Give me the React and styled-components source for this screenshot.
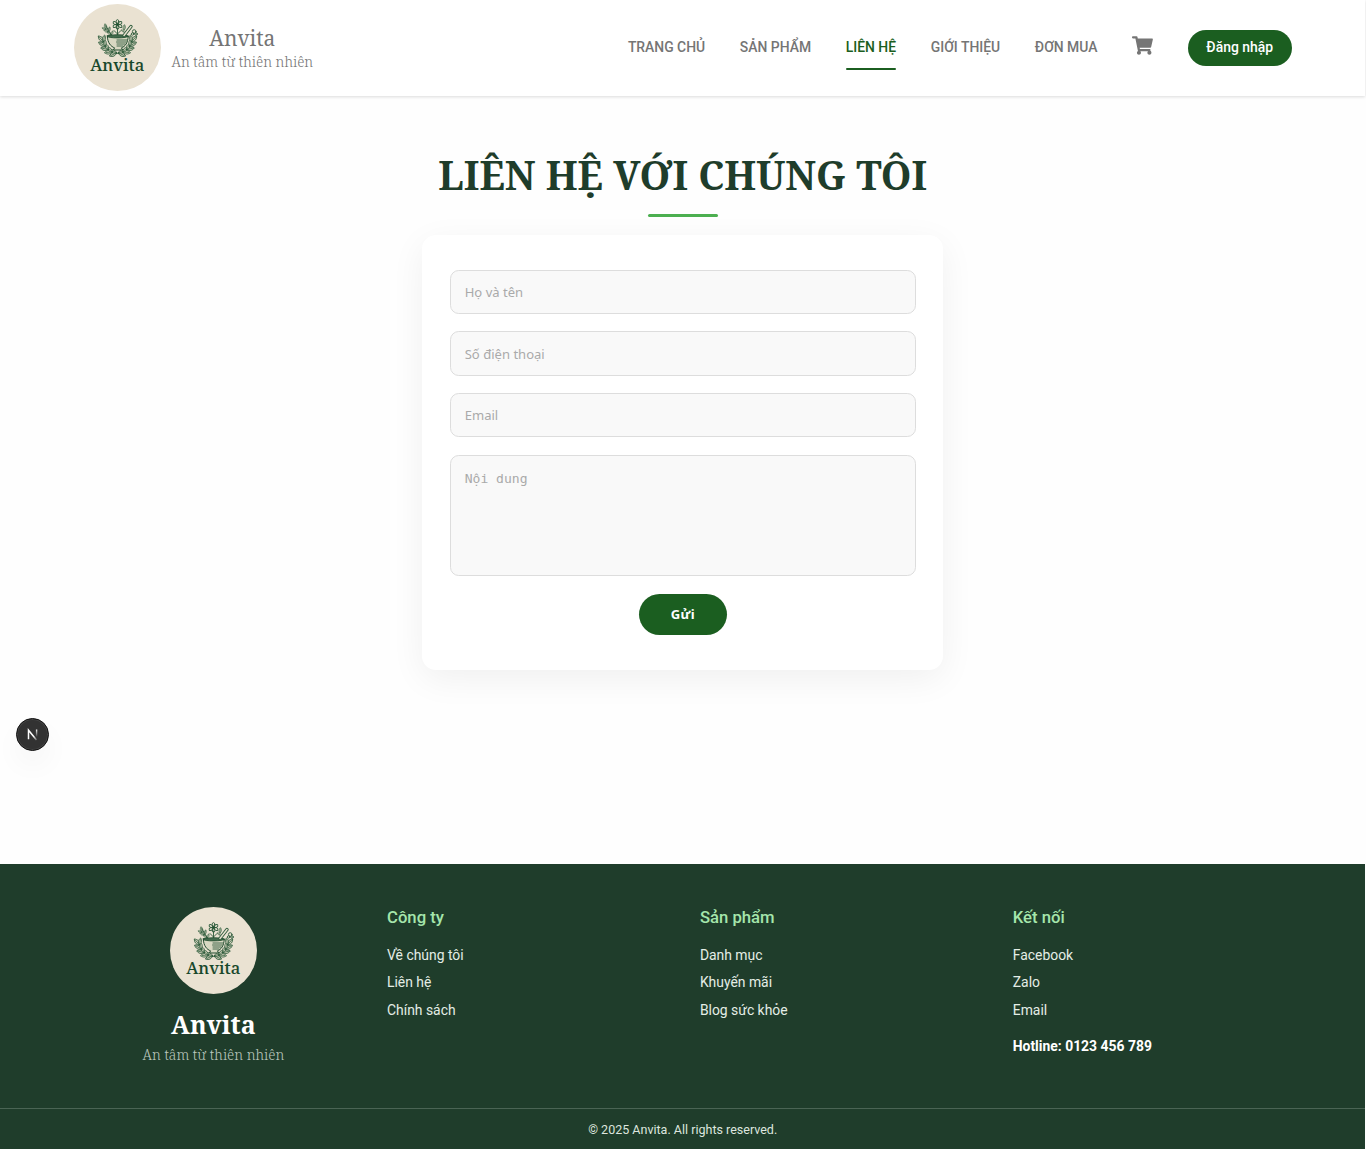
import React from "react";
import styled, { createGlobalStyle } from "styled-components";
import { FaShoppingCart } from "react-icons/fa";

const serif = `"Noto Serif", "Liberation Serif", serif`;

const Global = createGlobalStyle`
  *, *::before, *::after { box-sizing: border-box; }
  body { margin: 0; background: #fefefe; font-family: Roboto, "Noto Sans", sans-serif; font-size: 13.92px; color: #757575; }
  a { color: inherit; text-decoration: none; }
`;

const Page = styled.div`
  display: flex;
  flex-direction: column;
  width: 1365.4px;
  min-height: 1149px;
`;

const Header = styled.header`
  height: 96px;
  background: #fff;
  box-shadow: 0 1px 3px rgba(0, 0, 0, 0.14);
`;

const HeaderInner = styled.div`
  width: 1218px;
  height: 95px;
  margin: 0 auto;
  display: flex;
  align-items: center;
  justify-content: space-between;
`;

const Brand = styled.a`
  display: flex;
  align-items: center;
  gap: 10.8px;
`;

const LogoDisc = styled.svg`
  display: block;
  width: 87px;
  height: 87px;
  flex: none;
`;

const BrandText = styled.div`
  display: flex;
  flex-direction: column;
  align-items: center;
  font-family: ${serif};
`;

const BrandName = styled.span`
  font-size: 20.88px;
  line-height: 28px;
`;

const Tagline = styled.span`
  font-family: ${serif};
  font-size: 13.92px;
  font-weight: 300;
  line-height: 19px;
  white-space: nowrap;
  color: ${(p) => p.$color || "inherit"};
`;

const Nav = styled.nav`
  display: flex;
  align-items: center;
  gap: 34.68px;
`;

const NavLink = styled.a`
  font-size: 13.92px;
  font-weight: 500;
  line-height: 20px;
  padding: 12px 0 11px;
  text-transform: uppercase;
  color: ${(p) => (p.$active ? "#1b5e20" : "#757575")};
  border-bottom: 2px solid transparent;
  position: relative;
  &::after {
    content: "";
    display: ${(p) => (p.$active ? "block" : "none")};
    position: absolute;
    left: 0;
    right: 0;
    bottom: -2px;
    height: 2px;
    border-radius: 2px;
    background: #1b5e20;
  }
`;

const Cart = styled.a`
  display: flex;
  margin-top: -5px;
  font-size: 20.88px;
`;

const LoginButton = styled.button`
  width: 104px;
  height: 36px;
  border: 0;
  border-radius: 18px;
  background: #1b5e20;
  color: #fff;
  font: 500 13.92px/20px Roboto, sans-serif;
  padding: 0 0 2px;
`;

const Main = styled.main`
  height: 768px;
  display: flex;
  flex-direction: column;
  align-items: center;
`;

const Title = styled.h1`
  margin: 51px 0 0;
  font-family: ${serif};
  font-size: 38.98px;
  font-weight: 700;
  line-height: 56px;
  color: #1f3d2b;
  white-space: nowrap;
`;

const Rule = styled.div`
  width: 70px;
  height: 3px;
  border-radius: 2px;
  margin-top: 11px;
  background: #4caf50;
`;

const Form = styled.form`
  width: 521.4px;
  height: 435px;
  margin-top: 18px;
  padding: 35px 27.8px 0;
  display: flex;
  flex-direction: column;
  align-items: center;
  background: #fff;
  border-radius: 14px;
  box-shadow: 0 9px 35px rgba(0, 0, 0, 0.06);
`;

const field = `
  display: block;
  width: 466px;
  border: 1px solid #ddd;
  border-radius: 8.7px;
  background: #f9f9f9;
  color: #333;
  outline: 0;
  font-size: 13.05px;
  &::placeholder { color: #aaa; opacity: 1; }
`;

const Input = styled.input`
  ${field}
  height: 44.4px;
  margin: 0 0 17.05px;
  padding: 0 14px;
  font-family: "Noto Sans", sans-serif;
`;

const Textarea = styled.textarea`
  ${field}
  height: 121px;
  margin: 0.6px 0 18px;
  padding: 15px 14px;
  font-family: "DejaVu Sans Mono", monospace;
  resize: none;
`;

const Submit = styled.button`
  width: 88px;
  height: 41px;
  border: 0;
  border-radius: 21px;
  background: #1b5e20;
  color: #fff;
  font: 700 13.05px/18px "Noto Sans", sans-serif;
  letter-spacing: 0.43px;
  padding: 0 0 1px 0.5px;
`;

const Footer = styled.footer`
  background: #1f3d2b;
  height: 285px;
`;

const FooterGrid = styled.div`
  width: 1217.1px;
  height: 244px;
  margin: 0 auto;
  padding-top: 43px;
  display: grid;
  grid-template-columns: repeat(4, 1fr);
  gap: 34.4px;
`;

const FooterBrand = styled.div`
  display: flex;
  flex-direction: column;
  align-items: center;
`;

const FooterName = styled.h2`
  margin: 12px 0 3px;
  font-family: ${serif};
  font-size: 25px;
  line-height: 36px;
  font-weight: 700;
  color: #fff;
`;

const ColTitle = styled.h4`
  margin: 0 0 17px;
  font-size: 16.7px;
  font-weight: 500;
  line-height: 21px;
  color: #a5e6ab;
`;

const FooterLink = styled.a`
  display: block;
  margin-bottom: 7.4px;
  line-height: 20px;
  color: #e4ede6;
`;

const Hotline = styled.p`
  margin: 16px 0 0;
  line-height: 20px;
  font-weight: 700;
  color: #fff;
`;

const Copyright = styled.div`
  height: 41px;
  border-top: 1px solid #4a6454;
  text-align: center;
  font-size: 12.53px;
  line-height: 42px;
  color: #dde5df;
`;

const DevBadge = styled.div`
  position: fixed;
  left: 16px;
  top: 718px;
  width: 33px;
  height: 33px;
  border-radius: 50%;
  background: #323232;
  border: 1px solid #111;
  box-shadow: inset 0 0 0 1px #444, 0 14px 28px rgba(0, 0, 0, 0.04);
  svg { display: block; width: 31px; height: 31px; }
`;

const Leaf = ({ x, y, r, s = 1 }) => (
  <g transform={`translate(${x} ${y}) rotate(${r}) scale(${s})`}>
    <path d="M0 0C-3 -2.5 -2.6 -6 0 -9C2.6 -6 3 -2.5 0 0Z" fill="#d3d3bd" stroke="#2c5a3a" strokeWidth="1" />
    <path d="M0 0V-7" stroke="#2c5a3a" strokeWidth=".8" />
  </g>
);

const wreath = [-1, 1].flatMap((side) =>
  [4, 22, 40, 58, 76].flatMap((deg) => {
    const a = (deg * Math.PI) / 180;
    const x = 43.5 + side * 14.5 * Math.sin(a);
    const y = 34 + 15 * Math.cos(a);
    const r = 90 - deg;
    return [
      [x, y, side * (r + 28), 0.85],
      [x, y, side * (r - 24), 0.75],
    ];
  })
);

const sprigs = [
  [32, 26, -60, 0.5], [32, 25, -10, 0.6], [34, 28, -65, 0.5], [34, 28, 20, 0.6],
  [37, 31, -50, 0.5], [37, 31, 25, 0.5], [50, 26, 5, 0.6], [50, 28, -50, 0.4],
];

const Logo = () => (
  <LogoDisc viewBox="0 0 87 87">
    <circle cx="43.5" cy="43.5" r="43.5" fill="#eae2d2" />
    <g fill="none" strokeLinecap="round">
      <path d="M29 34C29 42 35 48.5 43.5 49.5C52 48.5 58 42 58 34" stroke="#2c5a3a" strokeWidth=".9" />
      {[...wreath, ...sprigs].map(([x, y, r, s], i) => <Leaf key={i} x={x} y={y} r={r} s={s} />)}
      <g stroke="#2c5a3a" strokeWidth=".9">
        <path d="M43.5 32V24M43.5 30L40 26.5M43.5 30L47 26.5M38 32L32 22" />
        {[0, 60, 120, 180, 240, 300].map((a) => (
          <ellipse key={a} cx="43.5" cy="17.4" rx="1.3" ry="1.8" transform={`rotate(${a} 43.5 20.5)`} />
        ))}
        <circle cx="43.5" cy="20.5" r="1.2" fill="#1f4b2d" />
        <circle cx="60.2" cy="27.5" r="1.8" />
        <circle cx="62" cy="30" r="1.3" />
        <circle cx="58.5" cy="30" r="1.2" />
      </g>
      <path d="M33.3 32H54.2C54 39 51 42.6 47.5 43.8L48.5 46H39.5L40.5 43.8C37 42.6 33.5 39 33.3 32Z" fill="#d8d8c2" stroke="#1f4b2d" strokeWidth="1" />
      <ellipse cx="43.8" cy="32.3" rx="10.6" ry="1.6" fill="#426a4c" stroke="#1f4b2d" strokeWidth=".8" />
      <path d="M43 36H53M42.5 38H52.3M43 40H51M43 42H49" stroke="#345f41" strokeWidth=".9" />
      <path d="M50 31.5L57 22.5" stroke="#2c5a3a" strokeWidth="3.3" />
      <path d="M50 31.5L57 22.5" stroke="#e9e1d0" strokeWidth="1.5" />
    </g>
    <text x="43.3" y="66.8" textAnchor="middle" textLength="54" lengthAdjust="spacingAndGlyphs" fill="#17472a" stroke="#17472a" strokeWidth=".1" fontFamily='"Noto Serif", "Liberation Serif", serif' fontSize="17" fontWeight="550">Anvita</text>
  </LogoDisc>
);

const navItems = ["Trang chủ", "Sản phẩm", "Liên hệ", "Giới thiệu", "Đơn mua"];
const columns = [
  { title: "Công ty", links: ["Về chúng tôi", "Liên hệ", "Chính sách"] },
  { title: "Sản phẩm", links: ["Danh mục", "Khuyến mãi", "Blog sức khỏe"] },
  { title: "Kết nối", links: ["Facebook", "Zalo", "Email"], hotline: "Hotline: 0123 456 789" },
];

export default function App() {
  return (
    <Page>
      <Global />
      <Header>
        <HeaderInner>
          <Brand href="#">
            <Logo />
            <BrandText>
              <BrandName>Anvita</BrandName>
              <Tagline>An tâm từ thiên nhiên</Tagline>
            </BrandText>
          </Brand>
          <Nav>
            {navItems.map((n) => <NavLink href="#" key={n} $active={n === "Liên hệ"}>{n}</NavLink>)}
            <Cart href="#"><FaShoppingCart /></Cart>
            <LoginButton>Đăng nhập</LoginButton>
          </Nav>
        </HeaderInner>
      </Header>
      <Main>
        <Title>LIÊN HỆ VỚI CHÚNG TÔI</Title>
        <Rule />
        <Form>
          <Input placeholder="Họ và tên" />
          <Input placeholder="Số điện thoại" />
          <Input placeholder="Email" />
          <Textarea placeholder="Nội dung" />
          <Submit type="button">Gửi</Submit>
        </Form>
      </Main>
      <Footer>
        <FooterGrid>
          <FooterBrand>
            <Logo />
            <FooterName>Anvita</FooterName>
            <Tagline $color="#bbc7be">An tâm từ thiên nhiên</Tagline>
          </FooterBrand>
          {columns.map((c) => (
            <div key={c.title}>
              <ColTitle>{c.title}</ColTitle>
              {c.links.map((l) => <FooterLink href="#" key={l}>{l}</FooterLink>)}
              {c.hotline && <Hotline>{c.hotline}</Hotline>}
            </div>
          ))}
        </FooterGrid>
        <Copyright>© 2025 Anvita. All rights reserved.</Copyright>
      </Footer>
      <DevBadge>
        <svg viewBox="0 0 31 31" fill="none">
          <defs>
            <linearGradient id="diag" x1="12" y1="11" x2="20" y2="21" gradientUnits="userSpaceOnUse">
              <stop offset=".6" stopColor="#fff" />
              <stop offset="1" stopColor="#fff" stopOpacity=".2" />
            </linearGradient>
            <linearGradient id="stem" x1="0" y1="10" x2="0" y2="18" gradientUnits="userSpaceOnUse">
              <stop stopColor="#fff" />
              <stop offset="1" stopColor="#fff" stopOpacity="0" />
            </linearGradient>
          </defs>
          <path d="M11.5 20.2V11.2L19.5 21" stroke="url(#diag)" strokeWidth="1.5" />
          <path d="M19.6 10.5V18" stroke="url(#stem)" strokeWidth="1.4" />
        </svg>
      </DevBadge>
    </Page>
  );
}
